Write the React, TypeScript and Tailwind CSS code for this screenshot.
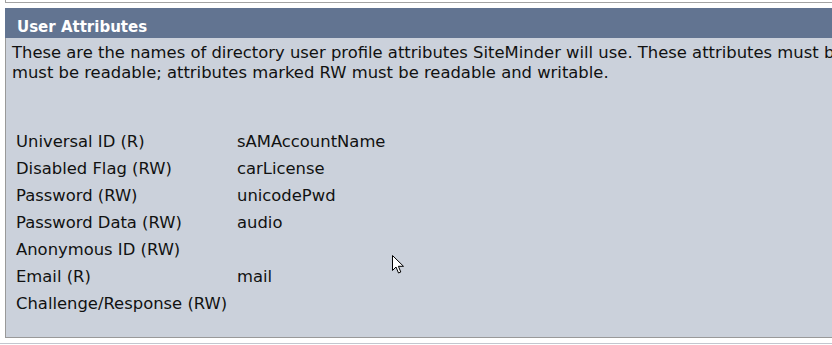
import React from "react";

interface Attr {
  label: string; // left column text
  value: string; // mapped directory attribute
}

const attrs: Attr[] = [
  { label: "Universal ID (R)", value: "sAMAccountName" },
  { label: "Disabled Flag (RW)", value: "carLicense" },
  { label: "Password (RW)", value: "unicodePwd" },
  { label: "Password Data (RW)", value: "audio" },
  { label: "Anonymous ID (RW)", value: "" },
  { label: "Email (R)", value: "mail" },
  { label: "Challenge/Response (RW)", value: "" },
];

function Cursor() {
  return (
    <svg
      width="13"
      height="20"
      viewBox="0 0 13 20"
      className="absolute left-[392px] top-[255px]"
    >
      <path
        d="M0.5 0.5 L0.5 15.5 L4 12 L6.5 18 L8.8 17 L6.4 11.3 L11.5 11.3 Z"
        fill="#ffffff"
        stroke="#000000"
        strokeWidth="1"
      />
    </svg>
  );
}

export default function App() {
  return (
    <div className="relative w-[832px] h-[345px] overflow-hidden bg-white font-['DejaVu_Sans',Verdana,sans-serif] text-[#111]">
      <div className="w-[900px] h-[3px] ml-[5px] border-l border-b border-[#a3a3a3]" />
      <div className="w-[900px] ml-[5px] mt-[5px]">
        <div className="h-[30px] bg-[#627491] px-[12px] pt-[10px] text-white font-bold text-[15px] leading-[18px]">
          User Attributes
        </div>
        <div className="h-[300px] bg-[#cbd1db] border-l border-b border-[#999] pl-[6px] pt-[5px]">
          <p className="text-[16.4px] leading-[20px] whitespace-nowrap">
            These are the names of directory user profile attributes SiteMinder will use. These attributes must be
            <br />
            must be readable; attributes marked RW must be readable and writable.
          </p>
          <div className="mt-[45px] ml-[4px] flex flex-col text-[16.4px] leading-[27px]">
            {attrs.map((a) => (
              <div key={a.label} className="flex">
                <span className="w-[221px]">{a.label}</span>
                <span>{a.value}</span>
              </div>
            ))}
          </div>
        </div>
      </div>
      <div className="w-[900px] h-[2px] mt-[5px] border-t border-[#c3c7cf]" />
      <Cursor />
    </div>
  );
}
